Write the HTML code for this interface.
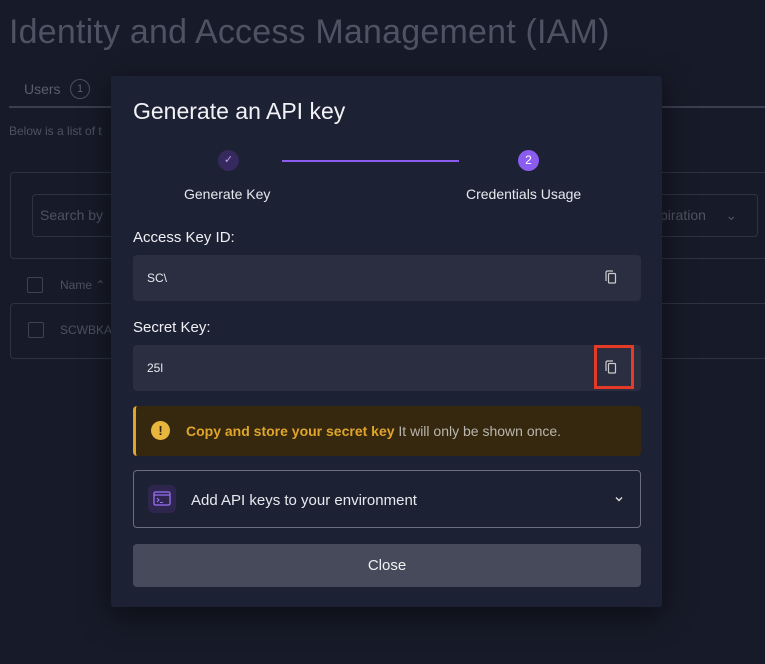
<!DOCTYPE html>
<html><head><style>
*{box-sizing:border-box;margin:0;padding:0}
body{width:765px;height:664px;background:#171a28;font-family:"Liberation Sans",sans-serif;position:relative;overflow:hidden;color:#e8e9ef}
.a{position:absolute}
.dim{color:#585c6c}
.modal{left:111px;top:76px;width:551px;height:531px;background:#1d2134;border-radius:3px;box-shadow:0 8px 30px rgba(0,0,0,.5)}
.field{left:22px;width:508px;height:46px;background:#2a2e40;border-radius:4px}
.lbl{left:22px;font-size:15px;color:#f0f0f4}
</style></head><body>
<div class="a dim" style="left:9px;top:13px;font-size:34px;color:#4e5262;letter-spacing:0.2px">Identity and Access Management (IAM)</div>
<div class="a" style="left:24px;top:81px;font-size:14px;color:#5a5e6e">Users</div>
<div class="a" style="left:70px;top:79px;width:20px;height:20px;border:1px solid #4a4e5e;border-radius:50%;font-size:11px;color:#5a5e6e;text-align:center;line-height:18px">1</div>
<div class="a" style="left:9px;top:106px;width:756px;height:2px;background:#3a3e4e"></div>
<div class="a" style="left:9px;top:124px;font-size:12px;color:#4e5262">Below is a list of t</div>
<div class="a" style="left:10px;top:172px;width:760px;height:87px;border:1px solid #2e3242;border-radius:4px"></div>
<div class="a" style="left:32px;top:194px;width:726px;height:43px;border:1px solid #2e3242;border-radius:4px"></div>
<div class="a" style="left:40px;top:207px;font-size:14px;color:#4e5262">Search by</div>
<div class="a" style="left:660px;top:207px;font-size:14px;color:#4e5262">piration &nbsp;&nbsp;&nbsp;&nbsp;⌄</div>
<div class="a" style="left:27px;top:277px;width:16px;height:16px;border:1px solid #3e4252;border-radius:2px"></div>
<div class="a" style="left:60px;top:278px;font-size:12px;color:#4e5262">Name ⌃</div>
<div class="a" style="left:10px;top:303px;width:760px;height:56px;border:1px solid #2e3242;border-radius:4px"></div>
<div class="a" style="left:28px;top:322px;width:16px;height:16px;border:1px solid #3e4252;border-radius:2px"></div>
<div class="a" style="left:60px;top:323px;font-size:12px;color:#4e5262">SCWBKA</div>

<div class="a modal">
<div class="a" style="left:22px;top:22px;font-size:23px;color:#f2f2f6">Generate an API key</div>
<div class="a" style="left:107px;top:74px;width:21px;height:21px;border-radius:50%;background:#35295e;color:#b9a2f5;font-size:11px;text-align:center;line-height:21px">✓</div>
<div class="a" style="left:171px;top:84px;width:177px;height:2px;background:#8a5cf0"></div>
<div class="a" style="left:407px;top:74px;width:21px;height:21px;border-radius:50%;background:#8a5cf0;color:#fff;font-size:12px;text-align:center;line-height:21px">2</div>
<div class="a" style="left:73px;top:110px;font-size:14px">Generate Key</div>
<div class="a" style="left:355px;top:110px;font-size:14px">Credentials Usage</div>
<div class="a lbl" style="top:153px">Access Key ID:</div>
<div class="a field" style="top:179px"><span class="a" style="left:14px;top:16px;font-size:12px">SC\</span>
<svg class="a" style="left:472px;top:15px" width="12" height="14" viewBox="0 0 12 14"><path d="M1 11V2.5A1.5 1.5 0 0 1 2.5 1H8" fill="none" stroke="#ccc" stroke-width="1.2"/><rect x="3.5" y="3.5" width="7" height="9.5" rx="1" fill="none" stroke="#ccc" stroke-width="1.2"/></svg></div>
<div class="a lbl" style="top:243px">Secret Key:</div>
<div class="a field" style="top:269px"><span class="a" style="left:14px;top:16px;font-size:12px">25l</span>
<svg class="a" style="left:472px;top:15px" width="12" height="14" viewBox="0 0 12 14"><path d="M1 11V2.5A1.5 1.5 0 0 1 2.5 1H8" fill="none" stroke="#ccc" stroke-width="1.2"/><rect x="3.5" y="3.5" width="7" height="9.5" rx="1" fill="none" stroke="#ccc" stroke-width="1.2"/></svg></div>
<div class="a" style="left:483px;top:269px;width:40px;height:44px;border:3px solid #e53a25"></div>
<div class="a" style="left:22px;top:330px;width:508px;height:50px;background:#35280e;border-left:3px solid #e0a52a;border-radius:4px"></div>
<div class="a" style="left:40px;top:345px;width:19px;height:19px;border-radius:50%;background:#e8b53d;color:#35280e;font-weight:bold;font-size:13px;text-align:center;line-height:19px">!</div>
<div class="a" style="left:75px;top:347px;font-size:14px;color:#e0a52a"><b>Copy and store your secret key</b> <span style="color:#b9b6ae">It will only be shown once.</span></div>
<div class="a" style="left:22px;top:394px;width:508px;height:58px;border:1px solid #6a6e7e;border-radius:4px"></div>
<div class="a" style="left:37px;top:409px;width:28px;height:28px;border-radius:6px;background:#2f2650"></div>
<svg class="a" style="left:42px;top:414px" width="18" height="18" viewBox="0 0 18 18"><rect x="1" y="2" width="16" height="13" rx="1.5" fill="none" stroke="#9b72f2" stroke-width="1.3"/><line x1="1" y1="5" x2="17" y2="5" stroke="#9b72f2" stroke-width="1.2"/><path d="M4 8l2 2-2 2M7 12.5h3" fill="none" stroke="#9b72f2" stroke-width="1.1"/></svg>
<div class="a" style="left:80px;top:416px;font-size:15px">Add API keys to your environment</div>
<svg class="a" style="left:504px;top:420px" width="8" height="6" viewBox="0 0 8 6"><path d="M1 1.5l3 3 3-3" fill="none" stroke="#ddd" stroke-width="1.4"/></svg>
<div class="a" style="left:22px;top:468px;width:508px;height:43px;background:#474a5a;border-radius:4px;text-align:center;line-height:43px;font-size:15px;color:#f0f0f4">Close</div>
</div>
</body></html>
